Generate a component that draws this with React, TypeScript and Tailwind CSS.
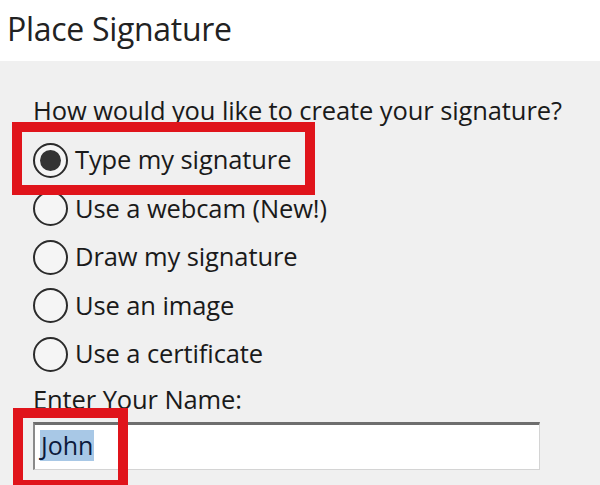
import React from "react";

const options = [
  "Type my signature",
  "Use a webcam (New!)",
  "Draw my signature",
  "Use an image",
  "Use a certificate",
];

function Radio({ checked }: { checked: boolean }) {
  return (
    <div className="w-[35px] h-[35px] rounded-full border-[2px] border-[#2b2b2b] bg-[#f5f5f5] flex items-center justify-center shrink-0">
      {checked && <div className="w-[21px] h-[21px] rounded-full bg-[#333333]" />}
    </div>
  );
}

export default function App() {
  return (
    <div
      className="relative w-[600px] h-[485px] overflow-hidden bg-[#f0f0f0] text-[#1a1a1a]"
      style={{ fontFamily: '"Open Sans", "Noto Sans", sans-serif' }}
    >
      <div className="h-[61px] bg-white flex items-center pl-[7px] pb-[4px]">
        <span className="text-[32px] tracking-[-0.3px] text-[#222]">Place Signature</span>
      </div>
      <div className="pl-[33px]">
        <div className="h-[75px] flex items-end pb-[6px]">
          <span className="text-[25.5px] leading-[40px] tracking-[-0.1px]">How would you like to create your signature?</span>
        </div>
        <div className="flex flex-col">
          {options.map((o, i) => (
            <div key={o} className="h-[48.5px] flex items-center gap-[7px]">
              <Radio checked={i === 0} />
              <span className="text-[25.5px] tracking-[-0.1px] pb-[2px]">{o}</span>
            </div>
          ))}
        </div>
        <div className="h-[43px] flex items-center pb-[1px]">
          <span className="text-[25.5px] tracking-[-0.1px]">Enter Your Name:</span>
        </div>
        <div className="w-[507px] h-[48px] bg-white border-t-[3px] border-l-[2px] border-t-[#6e6e6e] border-l-[#8a8a8a] border-r border-b border-r-[#d4d4d4] border-b-[#d4d4d4] flex items-center pl-[5px] pb-[3px]">
          <span className="bg-[#a8c8e6] text-[#0c1a3c] text-[25px] leading-[31px] px-[1px]">John</span>
        </div>
      </div>
      <div className="absolute left-[12px] top-[122px] w-[303px] h-[73px] border-[10px] border-[#e0141b]" />
      <div className="absolute left-[13px] top-[408px] w-[115px] h-[82px] border-[10px] border-[#e0141b]" />
    </div>
  );
}
